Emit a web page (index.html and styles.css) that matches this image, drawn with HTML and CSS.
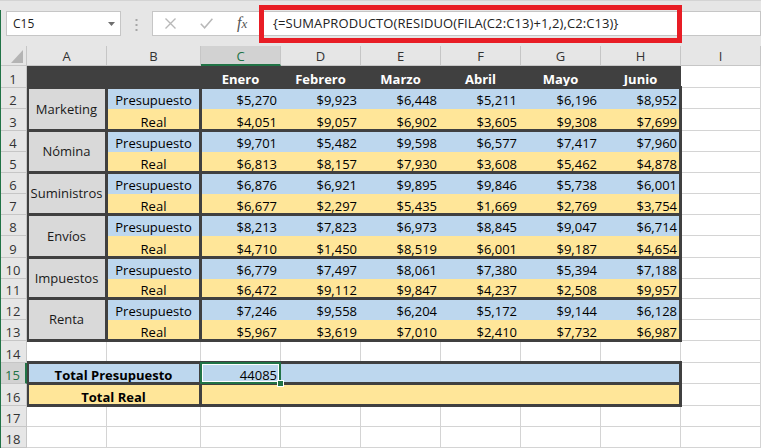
FILE: index.html
```html
<!DOCTYPE html>
<html lang="es">
<head>
<meta charset="utf-8">
<title>Excel</title>
<link rel="stylesheet" href="styles.css">
</head>
<body>
<div class="app">
  <div class="toolbar">
    <div class="namebox"><span>C15</span><svg class="dd" width="7" height="4" viewBox="0 0 7 4"><polygon points="0,0 7,0 3.5,4" fill="#6e6e6e"/></svg></div>
    <svg class="grip" width="3" height="12" viewBox="0 0 3 12"><rect x="0.5" y="0" width="2" height="2" fill="#a6a6a6"/><rect x="0.5" y="5" width="2" height="2" fill="#a6a6a6"/><rect x="0.5" y="10" width="2" height="2" fill="#a6a6a6"/></svg>
    <div class="fxbar">
      <div class="btns">
        <svg class="ix" width="11" height="11" viewBox="0 0 11 11"><path d="M0.5 0.5 L10.5 10.5 M10.5 0.5 L0.5 10.5" stroke="#b8b8b8" stroke-width="1.4" fill="none"/></svg>
        <svg class="ick" width="13" height="11" viewBox="0 0 13 11"><path d="M0.8 5.8 L4.6 9.8 L12.4 0.8" stroke="#b8b8b8" stroke-width="1.5" fill="none"/></svg>
        <span class="fx">f<span class="fxx">x</span></span>
      </div>
      <div class="formula">{=SUMAPRODUCTO(RESIDUO(FILA(C2:C13)+1,2),C2:C13)}</div>
    </div>
    <div class="annot"></div>
  </div>

  <div class="sheetwrap">
    <div class="sheet">
      <div class="corner"><svg width="26" height="19" viewBox="0 0 26 19"><polygon points="23,4 23,17 11,17" fill="#b4b4b4"/></svg></div>
      <div class="h">A</div><div class="h">B</div><div class="h sel">C</div><div class="h">D</div><div class="h">E</div><div class="h">F</div><div class="h">G</div><div class="h">H</div><div class="h">I</div>

      <div class="rh">1</div><div class="dk"></div><div class="dk"></div><div class="dk">Enero</div><div class="dk">Febrero</div><div class="dk">Marzo</div><div class="dk">Abril</div><div class="dk">Mayo</div><div class="dk">Junio</div><div></div>

      <div class="rh">2</div><div class="g">Marketing</div><div class="bl ct">Presupuesto</div><div class="bl n">$5,270</div><div class="bl n">$9,923</div><div class="bl n">$6,448</div><div class="bl n">$5,211</div><div class="bl n">$6,196</div><div class="bl n">$8,952</div><div></div>
      <div class="rh">3</div><div class="ye ct">Real</div><div class="ye n">$4,051</div><div class="ye n">$9,057</div><div class="ye n">$6,902</div><div class="ye n">$3,605</div><div class="ye n">$9,308</div><div class="ye n">$7,699</div><div></div>

      <div class="rh">4</div><div class="g">Nómina</div><div class="bl ct">Presupuesto</div><div class="bl n">$9,701</div><div class="bl n">$5,482</div><div class="bl n">$9,598</div><div class="bl n">$6,577</div><div class="bl n">$7,417</div><div class="bl n">$7,960</div><div></div>
      <div class="rh">5</div><div class="ye ct">Real</div><div class="ye n">$6,813</div><div class="ye n">$8,157</div><div class="ye n">$7,930</div><div class="ye n">$3,608</div><div class="ye n">$5,462</div><div class="ye n">$4,878</div><div></div>

      <div class="rh">6</div><div class="g">Suministros</div><div class="bl ct">Presupuesto</div><div class="bl n">$6,876</div><div class="bl n">$6,921</div><div class="bl n">$9,895</div><div class="bl n">$9,846</div><div class="bl n">$5,738</div><div class="bl n">$6,001</div><div></div>
      <div class="rh">7</div><div class="ye ct">Real</div><div class="ye n">$6,677</div><div class="ye n">$2,297</div><div class="ye n">$5,435</div><div class="ye n">$1,669</div><div class="ye n">$2,769</div><div class="ye n">$3,754</div><div></div>

      <div class="rh">8</div><div class="g">Envíos</div><div class="bl ct">Presupuesto</div><div class="bl n">$8,213</div><div class="bl n">$7,823</div><div class="bl n">$6,973</div><div class="bl n">$8,845</div><div class="bl n">$9,047</div><div class="bl n">$6,714</div><div></div>
      <div class="rh">9</div><div class="ye ct">Real</div><div class="ye n">$4,710</div><div class="ye n">$1,450</div><div class="ye n">$8,519</div><div class="ye n">$6,001</div><div class="ye n">$9,187</div><div class="ye n">$4,654</div><div></div>

      <div class="rh">10</div><div class="g">Impuestos</div><div class="bl ct">Presupuesto</div><div class="bl n">$6,779</div><div class="bl n">$7,497</div><div class="bl n">$8,061</div><div class="bl n">$7,380</div><div class="bl n">$5,394</div><div class="bl n">$7,188</div><div></div>
      <div class="rh">11</div><div class="ye ct">Real</div><div class="ye n">$6,472</div><div class="ye n">$9,112</div><div class="ye n">$9,847</div><div class="ye n">$4,237</div><div class="ye n">$2,508</div><div class="ye n">$9,957</div><div></div>

      <div class="rh">12</div><div class="g">Renta</div><div class="bl ct">Presupuesto</div><div class="bl n">$7,246</div><div class="bl n">$9,558</div><div class="bl n">$6,204</div><div class="bl n">$5,172</div><div class="bl n">$9,144</div><div class="bl n">$6,128</div><div></div>
      <div class="rh">13</div><div class="ye ct">Real</div><div class="ye n">$5,967</div><div class="ye n">$3,619</div><div class="ye n">$7,010</div><div class="ye n">$2,410</div><div class="ye n">$7,732</div><div class="ye n">$6,987</div><div></div>

      <div class="rh">14</div><div></div><div></div><div></div><div></div><div></div><div></div><div></div><div></div><div></div>

      <div class="rh sel">15</div><div class="bl ct b s2">Total Presupuesto</div><div class="bl n">44085</div><div class="bl"></div><div class="bl"></div><div class="bl"></div><div class="bl"></div><div class="bl"></div><div></div>
      <div class="rh">16</div><div class="ye ct b s2">Total Real</div><div class="ye"></div><div class="ye"></div><div class="ye"></div><div class="ye"></div><div class="ye"></div><div class="ye"></div><div></div>

      <div class="rh">17</div><div></div><div></div><div></div><div></div><div></div><div></div><div></div><div></div><div></div>
      <div class="rh">18</div><div></div><div></div><div></div><div></div><div></div><div></div><div></div><div></div><div></div>
    </div>

    <div class="frame">
      <div class="fr ca r2"></div><div class="fr cb r2"></div><div class="fr cc r2"></div>
      <div class="fr ca r4"></div><div class="fr cb r4"></div><div class="fr cc r4"></div>
      <div class="fr ca r6"></div><div class="fr cb r6"></div><div class="fr cc r6"></div>
      <div class="fr ca r8"></div><div class="fr cb r8"></div><div class="fr cc r8"></div>
      <div class="fr ca r10"></div><div class="fr cb r10"></div><div class="fr cc r10"></div>
      <div class="fr ca r12"></div><div class="fr cb r12"></div><div class="fr cc r12"></div>
      <div class="fr cab r15"></div><div class="fr cc r15"></div>
      <div class="fr cab r16"></div><div class="fr cc r16"></div>
      <div class="selbox"><div class="handle"></div></div>
    </div>
  </div>
</div>
</body>
</html>
```

FILE: styles.css
```css
* { box-sizing: border-box; margin: 0; padding: 0; }
html, body { width: 761px; height: 448px; overflow: hidden; background: #fff; }
body { font-family: "Open Sans", "Noto Sans", sans-serif; font-size: 13px; color: #000; }

.app { position: relative; width: 761px; height: 448px; }
.app::after { content: ""; position: absolute; left: 0; top: 10px; bottom: 0; width: 1px; background: #217346; }

/* toolbar / formula bar */
.toolbar { position: relative; height: 46px; background: #e6e6e6; border-top: 1px solid #d4d4d4; display: flex; align-items: flex-start; padding-top: 10px; }
.namebox { margin-left: 6px; width: 115px; height: 25px; background: #fff; border: 1px solid #c6c6c6; display: flex; align-items: center; justify-content: space-between; padding: 0 5px 0 6px; font-size: 12px; line-height: 23px; color: #222; }
.dd { display: block; margin-top: 1px; }
.grip { display: block; margin-left: 14px; margin-top: 8px; }
.fxbar { margin-left: 14px; flex: 1; height: 25px; display: flex; }
.btns { width: 107px; height: 25px; background: #fff; border: 1px solid #c6c6c6; border-right: none; display: flex; align-items: center; padding-left: 12px; }
.ix { display: block; }
.ick { display: block; margin-left: 24px; }
.fx { margin-left: 24px; font-family: "Liberation Serif", serif; font-style: italic; font-size: 16px; line-height: 16px; color: #555; }
.fxx { font-size: 13px; }
.formula { flex: 1; height: 25px; background: #fff; border: 1px solid #c6c6c6; border-left: none; padding-left: 14px; line-height: 23px; font-size: 13px; letter-spacing: 0.1px; color: #222; white-space: nowrap; overflow: hidden; }
.annot { position: absolute; left: 259px; top: 4px; width: 423px; height: 38px; border: 5px solid #e81d25; }

/* sheet */
.sheetwrap { display: grid; }
.sheet, .frame {
  grid-area: 1 / 1;
  display: grid;
  grid-template-columns: 27px 80px 94px repeat(6, 80px) 80px;
  grid-template-rows: 20px 22px 21px 22px 21px 21px 21px 21px 21px 22px 21px 20px 21px 21px 22px 21px 22px 21px 21px;
}
.frame { pointer-events: none; }

.sheet > div { border-right: 1px solid #d4d4d4; border-bottom: 1px solid #d4d4d4; display: flex; align-items: flex-end; line-height: 15px; white-space: nowrap; overflow: hidden; background: #fff; }

.sheet > .corner { background: #e6e6e6; border-color: #c6c6c6; align-items: flex-start; }
.sheet > .h { background: #e6e6e6; border-color: #c6c6c6; justify-content: center; padding-bottom: 1px; color: #333; }
.sheet > .h.sel { background: #d2d2d2; border-bottom: 2px solid #217346; padding-bottom: 0; color: #217346; }
.sheet > .rh { background: #e6e6e6; border-color: #c6c6c6; justify-content: center; color: #333; }
.sheet > .rh.sel { background: #d2d2d2; border-right: 2px solid #217346; color: #217346; }

.sheet > .dk { background: #404040; border-color: #404040; color: #fff; font-weight: 700; justify-content: center; }
.sheet > .g { background: #d9d9d9; border-color: #d9d9d9; grid-row: span 2; justify-content: center; align-items: center; color: #1a1a1a; }
.sheet > .bl { background: #bdd7ee; border-color: #bdd7ee; }
.sheet > .ye { background: #ffe699; border-color: #ffe699; }
.sheet > .n { justify-content: flex-end; padding-right: 3px; }
.sheet > .ct { justify-content: center; }
.sheet > .s2 { grid-column: span 2; }
.sheet > .b { font-weight: 700; }

/* thick borders */
.fr { border: 3px solid #404040; margin: -2px -1px -1px -2px; }
.ca { grid-column: 2; margin-left: 0; border-left-width: 2px; }
.cb { grid-column: 3; }
.cc { grid-column: 4 / 10; }
.cab { grid-column: 2 / 4; margin-left: 0; border-left-width: 2px; }
.r2 { grid-row: 3 / span 2; }
.r4 { grid-row: 5 / span 2; }
.r6 { grid-row: 7 / span 2; }
.r8 { grid-row: 9 / span 2; }
.r10 { grid-row: 11 / span 2; }
.r12 { grid-row: 13 / span 2; }
.r15 { grid-row: 16; }
.r16 { grid-row: 17; }

.selbox { grid-row: 16; grid-column: 4; margin: -1px 0 0 -1px; border: 2px solid #217346; box-shadow: inset 0 0 0 1px #fff; position: relative; }
.handle { position: absolute; right: -5px; bottom: -5px; width: 7px; height: 7px; background: #217346; border: 1px solid #fff; }
```
